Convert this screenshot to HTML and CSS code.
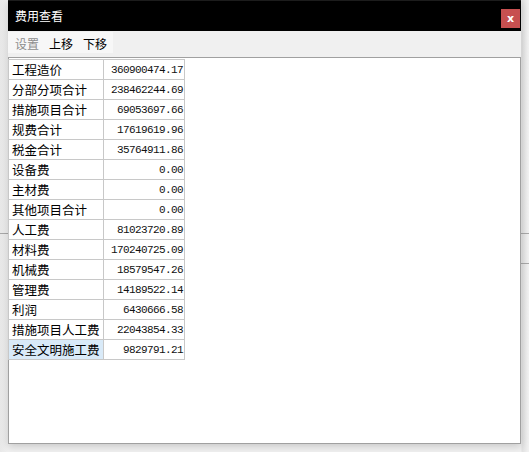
FILE: index.html
```html
<!DOCTYPE html>
<html lang="zh">
<head>
<meta charset="utf-8">
<title>费用查看</title>
<link rel="stylesheet" href="styles.css">
</head>
<body>
<div class="backdrop">
  <div class="bg-line bg-line-a"></div>
  <div class="bg-line bg-line-b"></div>
  <div class="window">
    <div class="titlebar">
      <span class="title">费用查看</span>
      <button class="close">x</button>
    </div>
    <div class="toolbar">
      <div class="tool-group">
        <span class="tool disabled">设置</span>
        <span class="tool">上移</span>
        <span class="tool">下移</span>
      </div>
    </div>
    <div class="content">
      <table class="fees">
        <tr><td class="name">工程造价</td><td class="num">360900474.17</td></tr>
        <tr><td class="name">分部分项合计</td><td class="num">238462244.69</td></tr>
        <tr><td class="name">措施项目合计</td><td class="num">69053697.66</td></tr>
        <tr><td class="name">规费合计</td><td class="num">17619619.96</td></tr>
        <tr><td class="name">税金合计</td><td class="num">35764911.86</td></tr>
        <tr><td class="name">设备费</td><td class="num">0.00</td></tr>
        <tr><td class="name">主材费</td><td class="num">0.00</td></tr>
        <tr><td class="name">其他项目合计</td><td class="num">0.00</td></tr>
        <tr><td class="name">人工费</td><td class="num">81023720.89</td></tr>
        <tr><td class="name">材料费</td><td class="num">170240725.09</td></tr>
        <tr><td class="name">机械费</td><td class="num">18579547.26</td></tr>
        <tr><td class="name">管理费</td><td class="num">14189522.14</td></tr>
        <tr><td class="name">利润</td><td class="num">6430666.58</td></tr>
        <tr><td class="name">措施项目人工费</td><td class="num">22043854.33</td></tr>
        <tr><td class="name selected">安全文明施工费</td><td class="num">9829791.21</td></tr>
      </table>
    </div>
  </div>
</div>
</body>
</html>
```

FILE: styles.css
```css
html, body {
  margin: 0;
  padding: 0;
}
body {
  background: #f0f0f0;
  font-family: "Noto Sans CJK SC", "Noto Sans", sans-serif;
  font-size: 12px;
  width: 529px;
  height: 452px;
  overflow: hidden;
}
.backdrop {
  position: relative;
  width: 529px;
  height: 452px;
  background: linear-gradient(to right, #e8e8e8 0, #f0f0f0 8px, #f0f0f0 521px, #e2e2e2 522px, #f2f2f2 529px);
}
.bg-line {
  position: absolute;
  left: 0;
  right: 0;
  height: 1px;
  background: #a8a8a8;
}
.bg-line-a { top: 233px; }
.bg-line-b { top: 263px; left: 521px; }
.window {
  position: absolute;
  left: 8px;
  top: 0;
  width: 513px;
  height: 444px;
  display: flex;
  flex-direction: column;
  box-shadow: 0 2px 8px rgba(0, 0, 0, 0.18);
  background: #fff;
}
.titlebar {
  height: 30px;
  background: #000;
  border-top: 1px solid #1c1c1c;
  display: flex;
  align-items: center;
  justify-content: space-between;
}
.title {
  color: #fff;
  padding-left: 7px;
  line-height: 16px;
  margin-top: -1px;
}
.close {
  width: 19px;
  height: 19px;
  margin-right: 1px;
  margin-top: 4px;
  border: none;
  padding: 0;
  background: #c75050;
  color: #fff;
  font-family: "DejaVu Sans", sans-serif;
  font-weight: bold;
  font-size: 11px;
  line-height: 17px;
  text-align: center;
}
.toolbar {
  height: 26px;
  background: #f0f0f0;
  border-bottom: 1px solid #a0a0a0;
  display: flex;
  align-items: flex-start;
}
.tool-group {
  margin-top: 1px;
  height: 21px;
  width: 105px;
  background: #f7f7f7;
  display: flex;
  align-items: center;
  gap: 10px;
  padding-left: 7px;
  box-sizing: border-box;
}
.tool {
  color: #000;
  line-height: 16px;
  margin-top: 3px;
}
.tool.disabled {
  color: #8d8d8d;
}
.content {
  flex: 1;
  background: #fff;
  border-left: 1px solid #a0a0a0;
  border-right: 1px solid #a0a0a0;
  border-bottom: 1px solid #a0a0a0;
  padding-top: 1px;
}
.fees {
  border-collapse: collapse;
  margin-left: -1px;
}
.fees td {
  border: 1px solid #c8c8c8;
  height: 19px;
  padding: 0;
  white-space: nowrap;
}
.fees .name {
  width: 91px;
  padding-left: 3px;
  color: #000;
  font-size: 12.5px;
  line-height: 18px;
}
.fees .num {
  width: 79px;
  text-align: right;
  padding-right: 1px;
  font-family: "Liberation Mono", monospace;
  font-size: 11px;
  letter-spacing: -0.6px;
  color: #111;
}
.fees .selected {
  background: #d9eaf8;
}
```
